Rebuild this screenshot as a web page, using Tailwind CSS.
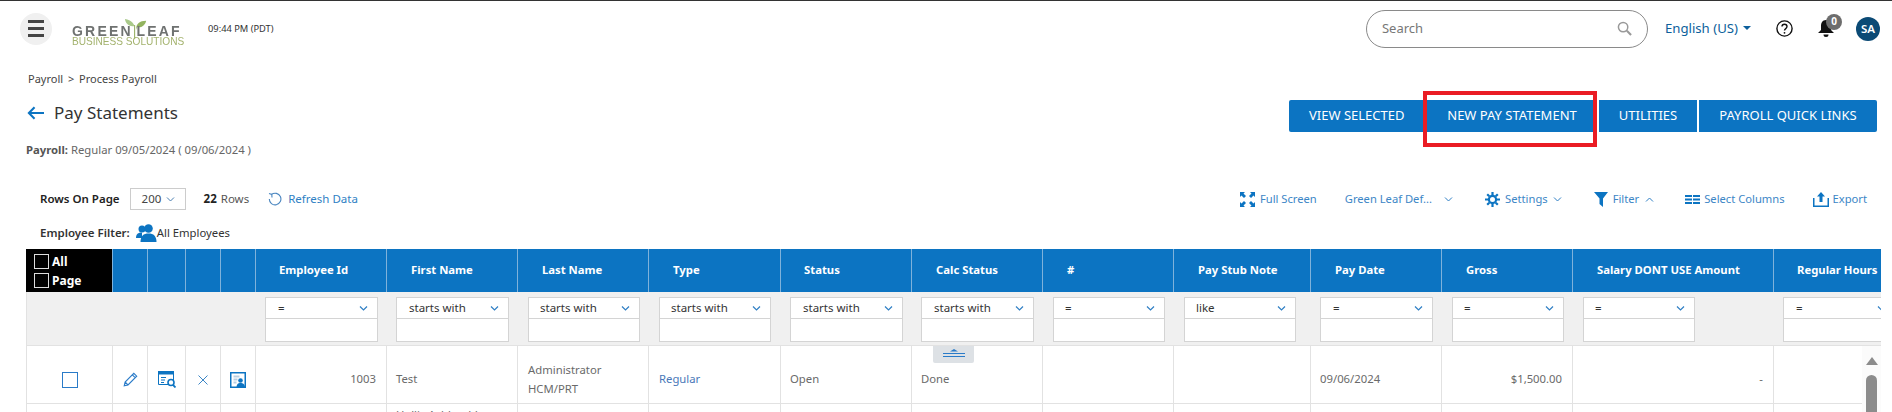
<!DOCTYPE html>
<html>
<head>
<meta charset="utf-8">
<script src="https://cdn.jsdelivr.net/npm/@tailwindcss/browser@4"></script>
</head>
<body class="w-[1892px] h-[412px] overflow-hidden bg-white font-['Noto_Sans','Open_Sans',sans-serif] text-[#333]">
<div class="h-px bg-[#333]"></div>
<header class="h-[55px] flex items-center pl-[20px] pr-[12px]">
  <div class="w-8 h-8 rounded-full bg-[#f0f0f0] flex flex-col items-center justify-center gap-[4px]">
    <span class="w-4 h-[3px] bg-[#444]"></span><span class="w-4 h-[3px] bg-[#444]"></span><span class="w-4 h-[3px] bg-[#444]"></span>
  </div>
  <div class="ml-[20px] w-[113px] h-[36px] relative font-['Liberation_Sans',sans-serif] blur-[0.4px]">
    <svg class="absolute left-[52px] top-[6px]" width="24" height="13" viewBox="0 0 26 14"><path d="M12 14C12 7 8 3 1 2c1 6 5 8 10 8" fill="#a9c98a"/><path d="M13 14c0-7 4-10 11-10-1 5-5 8-10 7" fill="#93b45f"/></svg>
    <div class="absolute left-0 top-[13px] text-[14px] leading-[14px] font-bold text-[#6f7271] tracking-[2.200px] whitespace-nowrap">GREEN<span class="text-[#9db46c] font-normal tracking-normal">|</span>LEAF</div>
    <div class="absolute left-0 top-[26px] text-[10.100px] leading-[10px] text-[#a3b26d] whitespace-nowrap">BUSINESS SOLUTIONS</div>
  </div>
  <div class="ml-[23px] text-[9.300px] text-[#333]">09:44 PM (PDT)</div>
  <div class="ml-auto flex items-center">
    <div class="w-[282px] h-[38px] rounded-[19px] border border-[#8a8a8a] flex items-center pl-[15px] pr-[15px] text-[13px] text-[#777]">
      <span>Search</span>
      <svg class="ml-auto" width="15" height="15" viewBox="0 0 16 16" fill="none" stroke="#999" stroke-width="1.6"><circle cx="6.5" cy="6.5" r="5"/><path d="M10.500 10.500l4.500 4.500" stroke-width="2.200"/></svg>
    </div>
    <div class="ml-[17px] text-[13.200px] text-[#0d5f9c] flex items-center gap-[5px]">English (US)<span class="w-0 h-0 border-x-[4px] border-x-transparent border-t-[4px] border-t-[#0d5f9c]"></span></div>
    <svg class="ml-[25px]" width="17" height="17" viewBox="0 0 17 17" fill="none" stroke="#111" stroke-width="1.400"><circle cx="8.500" cy="8.500" r="7.600"/><path d="M6 6.600c0-3.200 5-3.200 5 0 0 2-2.500 2-2.500 4"/><circle cx="8.500" cy="12.800" r=".9" fill="#111" stroke="none"/></svg>
    <div class="ml-[25px] relative w-[24px] h-[24px] -mt-[5px]">
      <svg class="absolute left-0 top-[6px]" width="16" height="18" viewBox="0 0 16 18" fill="#111"><path d="M8 0c3.600 0 5 3 5 6v4l3 3H0l3-3V6c0-3 1.400-6 5-6z"/><path d="M5.500 14.500h5a2.500 2.500 0 0 1-5 0z"/></svg>
      <span class="absolute left-[8px] top-0 w-[16px] h-[16px] rounded-full bg-[#6d6d6d] text-white text-[10px] leading-[15px] text-center font-bold">0</span>
    </div>
    <div class="ml-[14px] w-[24px] h-[24px] rounded-full bg-[#0b4a75] text-white text-[11.500px] font-semibold flex items-center justify-center">SA</div>
  </div>
</header>
<div class="h-[37px] pl-[28px] pt-[15px] text-[11px] leading-[16px] text-[#444]">Payroll <span class="mx-[2px]">&gt;</span> Process Payroll</div>
<div class="h-[40px] pl-[27px] pr-[15px] flex items-start justify-between">
  <div class="flex items-center gap-[10px] h-[40px]">
    <svg width="17" height="14" viewBox="0 0 18 14" fill="none" stroke="#0c74c2" stroke-width="2.200"><path d="M18 7H2M8 1L2 7l6 6"/></svg>
    <span class="text-[17px] text-[#333]">Pay Statements</span>
  </div>
  <div class="flex gap-[2px] text-[13px] text-white mt-[7px] h-[32px]">
    <div class="w-[134px] h-[32px] bg-[#0c74c2] rounded-l-[2px] flex items-center pl-[20px]">VIEW SELECTED</div>
    <div class="w-[172px] h-[32px] bg-[#0c74c2] flex items-center justify-center pl-[2px] relative">NEW PAY STATEMENT
      <div class="absolute left-[-2px] top-[-9px] w-[174px] h-[56px] border-[4px] border-[#ea1c24]"></div>
    </div>
    <div class="w-[98px] h-[32px] bg-[#0c74c2] flex items-center justify-center">UTILITIES</div>
    <div class="w-[178px] h-[32px] bg-[#0c74c2] rounded-r-[2px] flex items-center justify-center">PAYROLL QUICK LINKS</div>
  </div>
</div>
<div class="h-[37px] pl-[26px] pt-[9px] text-[11.300px] leading-[16px] text-[#666]"><b class="font-bold text-[#555]">Payroll:</b> Regular 09/05/2024 ( 09/06/2024 )</div>
<div class="h-[54px] pl-[40px] pr-[25px] pt-[18px] flex items-start text-[11.500px]">
  <span class="font-semibold text-[#222] leading-[22px]">Rows On Page</span>
  <span class="ml-[10px] w-[56px] h-[22px] border border-[#ccc] flex items-center pl-[11px] gap-[5px] text-[#444]">200
    <svg width="9" height="5" viewBox="0 0 9 5" fill="none" stroke="#4a7fb0" stroke-width="1"><path d="M1 .5l3.500 3.500L8 .5"/></svg></span>
  <span class="ml-[18px] leading-[22px] font-bold text-[#222]">22</span><span class="ml-[4px] leading-[22px] text-[#555]">Rows</span>
  <svg class="ml-[19px] mt-[4px]" width="14" height="14" viewBox="0 0 14 14" fill="none" stroke="#4a86c0" stroke-width="1.100"><path d="M3.500 2.500A5.800 5.800 0 1 1 1.300 7M1 1.500l2.800 1 .2 3"/></svg>
  <span class="ml-[6px] leading-[22px] text-[#2f7fc4]">Refresh Data</span>
  <div class="ml-auto flex items-center h-[22px] text-[#3c86c6] text-[11.200px]">
    <svg width="15" height="15" viewBox="0 0 15 15" fill="#0c74c2"><path d="M0 0h5L3.500 1.500 6 4 4 6 1.500 3.500 0 5zM15 0v5l-1.500-1.500L11 6 9 4l2.500-2.500L10 0zM0 15v-5l1.500 1.500L4 9l2 2-2.500 2.500L5 15zM15 15h-5l1.500-1.500L9 11l2-2 2.500 2.500L15 10z"/></svg>
    <span class="ml-[5px]">Full Screen</span>
    <span class="ml-[28px]">Green Leaf Def...</span>
    <svg class="ml-[12px]" width="9" height="5" viewBox="0 0 9 5" fill="none" stroke="#2f7fc4" stroke-width="1"><path d="M1 .5l3.500 3.500L8 .5"/></svg>
    <svg class="ml-[32px]" width="15" height="15" viewBox="0 0 15 15" fill="none" stroke="#0c74c2"><circle cx="7.500" cy="7.500" r="3.600" stroke-width="2.200"/><path d="M7.500 0v3M7.500 12v3M0 7.500h3M12 7.500h3M2.200 2.200l2.100 2.100M10.700 10.700l2.100 2.100M12.800 2.200l-2.100 2.100M4.300 10.700l-2.100 2.100" stroke-width="2.200"/></svg>
    <span class="ml-[5px]">Settings</span>
    <svg class="ml-[5px]" width="9" height="5" viewBox="0 0 9 5" fill="none" stroke="#2f7fc4" stroke-width="1"><path d="M1 .5l3.500 3.500L8 .5"/></svg>
    <svg class="ml-[32px]" width="14" height="15" viewBox="0 0 14 15" fill="#0c74c2"><path d="M0 0h14L9 6.500V15L5.500 12V6.500z"/></svg>
    <span class="ml-[5px]">Filter</span>
    <svg class="ml-[6px]" width="9" height="5" viewBox="0 0 9 5" fill="none" stroke="#2f7fc4" stroke-width="1"><path d="M1 4.500L4.500 1 8 4.500"/></svg>
    <svg class="ml-[31px]" width="15" height="9" viewBox="0 0 15 9" fill="#0c74c2"><path d="M0 0h7v2H0zM8 0h7v2H8zM0 3.500h7v2H0zM8 3.500h7v2H8zM0 7h7v2H0zM8 7h7v2H8z"/></svg>
    <span class="ml-[4px]">Select Columns</span>
    <svg class="ml-[28px]" width="16" height="15" viewBox="0 0 16 15" fill="#0c74c2"><path d="M8 0l4 4.500H9.500V10h-3V4.500H4z"/><path d="M0 6h1.500v7.500h13V6H16v9H0z"/></svg>
    <span class="ml-[4px]">Export</span>
  </div>
</div>
<div class="h-[25px] pl-[40px] flex items-start text-[11.500px]">
  <span class="font-semibold text-[#333] leading-[18px]">Employee Filter:</span>
  <svg class="ml-[6px]" width="21" height="18" viewBox="0 0 21 18" fill="#0c74c2"><circle cx="6" cy="5" r="3.500"/><path d="M0 14c0-4 2-5.500 6-5.500V14z"/><circle cx="12.500" cy="4.500" r="4.300"/><path d="M4.500 18c0-6 3-8.500 8-8.500s8 2.500 8 8.500z"/></svg>
  <span class="leading-[18px] text-[11.300px] text-[#333]">All Employees</span>
</div>
<div class="relative ml-[26px] w-[1855px] overflow-hidden text-[11.300px]">
  <div class="grid grid-cols-[87px_35px_38px_35px_35px_131px_131px_131px_132px_131px_131px_131px_137px_131px_131px_201px_107px] h-[43px] bg-[#0c74c2] text-white font-bold [&>div]:border-r [&>div]:border-[#7fb2db] [&>div]:flex [&>div]:items-center [&>div]:whitespace-nowrap">
    <div class="bg-black !items-start pl-[8px] pt-[3px] flex-col leading-[19px] !border-[#7fb2db] text-[12px]">
      <span class="flex items-center gap-[3px]"><i class="w-[15px] h-[15px] border border-[#ddd] block"></i>All</span>
      <span class="flex items-center gap-[3px]"><i class="w-[15px] h-[15px] border border-[#ddd] block"></i>Page</span>
    </div>
    <div></div><div></div><div></div><div></div>
    <div class="pl-[23px]">Employee Id</div>
    <div class="pl-[24px]">First Name</div>
    <div class="pl-[24px]">Last Name</div>
    <div class="pl-[24px]">Type</div>
    <div class="pl-[23px]">Status</div>
    <div class="pl-[24px]">Calc Status</div>
    <div class="pl-[24px]">#</div>
    <div class="pl-[24px]">Pay Stub Note</div>
    <div class="pl-[24px]">Pay Date</div>
    <div class="pl-[24px]">Gross</div>
    <div class="pl-[24px]">Salary DONT USE Amount</div>
    <div class="pl-[23px] !border-0">Regular Hours</div>
  </div>
  <div class="grid grid-cols-[86px_35px_38px_35px_35px_131px_131px_131px_132px_131px_131px_131px_137px_131px_131px_201px_107px] h-[54px] bg-[#f0f0f0] border-b border-l border-[#e2e2e2] pt-[5px] text-[11.500px] text-[#333] [&>div]:w-[113px] [&>div]:h-[45px] [&>div]:bg-white [&>div]:border [&>div]:border-[#d4d4d4] [&>div]:flex [&>div]:flex-col">
    <section class="col-span-5"></section>
    <div class="ml-[9px]"><p class="h-[21px] border-b border-[#d4d4d4] flex items-center justify-between pl-[12px] pr-[9px] leading-none">=<svg width="9" height="5" viewBox="0 0 9 5" fill="none" stroke="#2f7fc4" stroke-width="1.200"><path d="M1 .5l3.500 3.500L8 .5"/></svg></p></div>
    <div class="ml-[9px]"><p class="h-[21px] border-b border-[#d4d4d4] flex items-center justify-between pl-[12px] pr-[9px] leading-none">starts with<svg width="9" height="5" viewBox="0 0 9 5" fill="none" stroke="#2f7fc4" stroke-width="1.200"><path d="M1 .5l3.500 3.500L8 .5"/></svg></p></div>
    <div class="ml-[10px] !w-[112px]"><p class="h-[21px] border-b border-[#d4d4d4] flex items-center justify-between pl-[11px] pr-[9px] leading-none">starts with<svg width="9" height="5" viewBox="0 0 9 5" fill="none" stroke="#2f7fc4" stroke-width="1.200"><path d="M1 .5l3.500 3.500L8 .5"/></svg></p></div>
    <div class="ml-[10px] !w-[112px]"><p class="h-[21px] border-b border-[#d4d4d4] flex items-center justify-between pl-[11px] pr-[9px] leading-none">starts with<svg width="9" height="5" viewBox="0 0 9 5" fill="none" stroke="#2f7fc4" stroke-width="1.200"><path d="M1 .5l3.500 3.500L8 .5"/></svg></p></div>
    <div class="ml-[9px]"><p class="h-[21px] border-b border-[#d4d4d4] flex items-center justify-between pl-[12px] pr-[9px] leading-none">starts with<svg width="9" height="5" viewBox="0 0 9 5" fill="none" stroke="#2f7fc4" stroke-width="1.200"><path d="M1 .5l3.500 3.500L8 .5"/></svg></p></div>
    <div class="ml-[9px]"><p class="h-[21px] border-b border-[#d4d4d4] flex items-center justify-between pl-[12px] pr-[9px] leading-none">starts with<svg width="9" height="5" viewBox="0 0 9 5" fill="none" stroke="#2f7fc4" stroke-width="1.200"><path d="M1 .5l3.500 3.500L8 .5"/></svg></p></div>
    <div class="ml-[10px] !w-[112px]"><p class="h-[21px] border-b border-[#d4d4d4] flex items-center justify-between pl-[11px] pr-[9px] leading-none">=<svg width="9" height="5" viewBox="0 0 9 5" fill="none" stroke="#2f7fc4" stroke-width="1.200"><path d="M1 .5l3.500 3.500L8 .5"/></svg></p></div>
    <div class="ml-[10px] !w-[112px]"><p class="h-[21px] border-b border-[#d4d4d4] flex items-center justify-between pl-[11px] pr-[9px] leading-none">like<svg width="9" height="5" viewBox="0 0 9 5" fill="none" stroke="#2f7fc4" stroke-width="1.200"><path d="M1 .5l3.500 3.500L8 .5"/></svg></p></div>
    <div class="ml-[9px]"><p class="h-[21px] border-b border-[#d4d4d4] flex items-center justify-between pl-[12px] pr-[9px] leading-none">=<svg width="9" height="5" viewBox="0 0 9 5" fill="none" stroke="#2f7fc4" stroke-width="1.200"><path d="M1 .5l3.500 3.500L8 .5"/></svg></p></div>
    <div class="ml-[10px] !w-[112px]"><p class="h-[21px] border-b border-[#d4d4d4] flex items-center justify-between pl-[11px] pr-[9px] leading-none">=<svg width="9" height="5" viewBox="0 0 9 5" fill="none" stroke="#2f7fc4" stroke-width="1.200"><path d="M1 .5l3.500 3.500L8 .5"/></svg></p></div>
    <div class="ml-[10px] !w-[112px]"><p class="h-[21px] border-b border-[#d4d4d4] flex items-center justify-between pl-[11px] pr-[9px] leading-none">=<svg width="9" height="5" viewBox="0 0 9 5" fill="none" stroke="#2f7fc4" stroke-width="1.200"><path d="M1 .5l3.500 3.500L8 .5"/></svg></p></div>
    <div class="ml-[9px]"><p class="h-[21px] border-b border-[#d4d4d4] flex items-center justify-between pl-[12px] pr-[9px] leading-none">=<svg width="9" height="5" viewBox="0 0 9 5" fill="none" stroke="#2f7fc4" stroke-width="1.200"><path d="M1 .5l3.500 3.500L8 .5"/></svg></p></div>
  </div>
  <div class="grid grid-cols-[86px_35px_38px_35px_35px_131px_131px_131px_132px_131px_131px_131px_137px_131px_131px_201px_107px] h-[58px] border-b border-l border-[#e2e2e2] text-[#6a6a6a] [&>div]:border-r [&>div]:border-[#e2e2e2] [&>div]:flex [&>div]:items-center [&>div]:pt-[10px]">
    <div class="justify-center"><i class="block w-4 h-4 border-[1.500px] border-[#2a7bc8]"></i></div>
    <div class="justify-center"><svg width="15" height="15" viewBox="0 0 15 15" fill="none" stroke="#2a7bc8" stroke-width="1.100"><path d="M1.200 13.800l.9-3.800L10.800 1.300l2.900 2.900L5 12.900zM2.100 10l2.900 2.900M9.300 2.800l2.900 2.900"/></svg></div>
    <div class="justify-center"><svg class="-mt-[1px]" width="18" height="17" viewBox="0 0 18 17" fill="none" stroke="#0c74c2"><path d="M.5 .5h15v13H.5z" stroke-width="1"/><path d="M0 0h16v3.500H0z" fill="#0c74c2" stroke="none"/><path d="M3 6.500h5M3 9h4M3 11.500h3" stroke-width="1"/><circle cx="13" cy="11.500" r="3" fill="#fff" stroke-width="1.600"/><path d="M15 13.800l2.500 2.700" stroke-width="1.800"/></svg></div>
    <div class="justify-center"><svg width="10" height="10" viewBox="0 0 10 10" fill="none" stroke="#3c86c6" stroke-width="1"><path d="M.5 .5l9 9M9.500 .5l-9 9"/></svg></div>
    <div class="justify-center"><svg width="16" height="16" viewBox="0 0 16 16"><path d="M0 0h16v16H0z" fill="#0c74c2"/><path d="M1.500 1.500h13v13h-13z" fill="#fff"/><path d="M3.500 3.500h6v2h-6zM3.500 6.500h4v2h-4zM3.500 9.500h3v2h-3z" fill="#b9cfe2"/><circle cx="10.500" cy="8.500" r="2.300" fill="#0c74c2"/><path d="M6.500 16c0-4 1.500-5 4-5s4.500 1 4.500 5z" fill="#0c74c2"/></svg></div>
    <div class="justify-end pr-[10px]">1003</div>
    <div class="pl-[9px]">Test</div>
    <div class="pl-[10px] !items-start !pt-[14px] leading-[19px] flex-col">Administrator<span>HCM/PRT</span></div>
    <div class="pl-[10px] text-[#4a78b8]">Regular</div>
    <div class="pl-[9px]">Open</div>
    <div class="pl-[9px]">Done</div>
    <div></div>
    <div></div>
    <div class="pl-[9px]">09/06/2024</div>
    <div class="justify-end pr-[10px]">$1,500.00</div>
    <div class="justify-end pr-[10px]">-</div>
    <div class="!border-0"></div>
  </div>
  <div class="grid grid-cols-[86px_35px_38px_35px_35px_131px_131px_131px_132px_131px_131px_131px_137px_131px_131px_201px_107px] h-[20px] border-l border-[#e2e2e2] text-[#6a6a6a] [&>div]:border-r [&>div]:border-[#e2e2e2]">
    <div></div><div></div><div></div><div></div><div></div><div></div>
    <div class="pl-[9px] pt-[3px] leading-[16px] whitespace-nowrap overflow-hidden">Hollis Ashland-Lee</div>
    <div></div><div></div><div></div><div></div><div></div><div></div><div></div><div></div><div></div><div class="!border-0"></div>
  </div>
  <div class="absolute left-[907px] top-[97px] w-[41px] h-[17px] bg-[#dde1e5] rounded-b-[2px]">
    <svg class="mx-auto mt-[3px]" width="22" height="9" viewBox="0 0 22 9" fill="#2a7bc8"><path d="M11 0l4 2.500H7zM0 4h22v1H0zM0 7h22v1H0z"/></svg>
  </div>
  <div class="absolute right-0 top-[97px] w-[19px] h-[66px] bg-[#fbfbfb] flex flex-col items-center">
    <span class="mt-[11px] w-0 h-0 border-x-[6px] border-x-transparent border-b-[8px] border-b-[#8c8c8c]"></span>
    <span class="mt-[10px] w-[11px] h-[60px] rounded-t-[6px] bg-[#8c8c8c]"></span>
  </div>
</div>
</body>
</html>
